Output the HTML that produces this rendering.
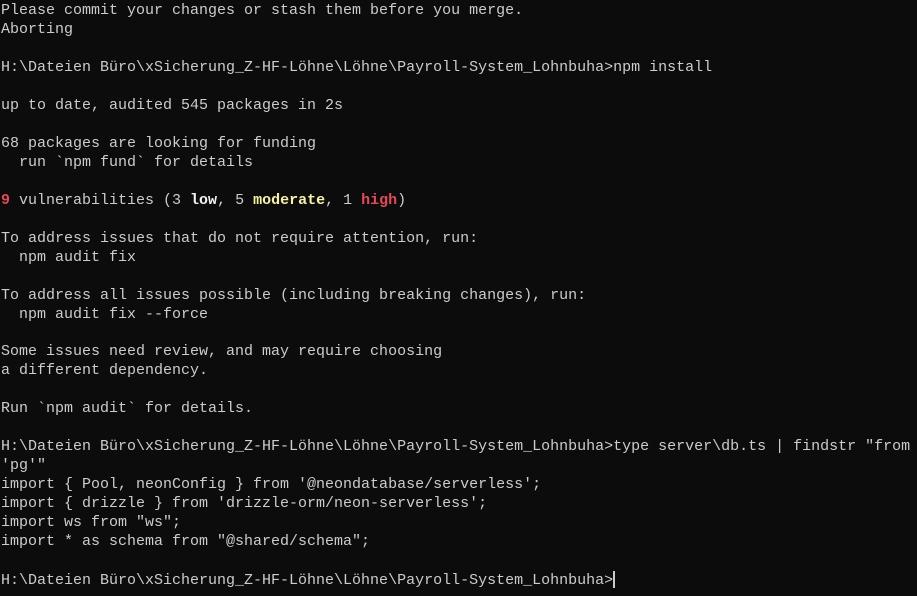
<!DOCTYPE html><html><head><style>
html,body{margin:0;background:#0c0c0c;width:917px;height:596px;overflow:hidden}
pre{margin:0;padding:2px 0 0 1px;font-family:"Liberation Mono","DejaVu Sans Mono",monospace;font-size:15px;line-height:18.97px;color:#cccccc;white-space:pre}
.w{color:#f2f2f2;font-weight:bold}.y{color:#f9f1a5;font-weight:bold}.r{color:#e74856;font-weight:bold}
.c{display:inline-block;width:1.5px;height:17px;background:#ccc;vertical-align:-4px}
</style></head><body><pre>Please commit your changes or stash them before you merge.
Aborting

H:\Dateien Büro\xSicherung_Z-HF-Löhne\Löhne\Payroll-System_Lohnbuha>npm install

up to date, audited 545 packages in 2s

68 packages are looking for funding
  run `npm fund` for details

<span class="r">9</span> vulnerabilities (3 <span class="w">low</span>, 5 <span class="y">moderate</span>, 1 <span class="r">high</span>)

To address issues that do not require attention, run:
  npm audit fix

To address all issues possible (including breaking changes), run:
  npm audit fix --force

Some issues need review, and may require choosing
a different dependency.

Run `npm audit` for details.

H:\Dateien Büro\xSicherung_Z-HF-Löhne\Löhne\Payroll-System_Lohnbuha>type server\db.ts | findstr "from
'pg'"
import { Pool, neonConfig } from '@neondatabase/serverless';
import { drizzle } from 'drizzle-orm/neon-serverless';
import ws from "ws";
import * as schema from "@shared/schema";

H:\Dateien Büro\xSicherung_Z-HF-Löhne\Löhne\Payroll-System_Lohnbuha><span class="c"></span></pre></body></html>
